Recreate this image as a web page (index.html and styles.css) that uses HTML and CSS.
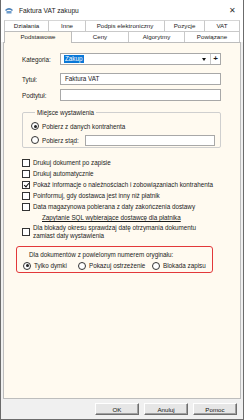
FILE: index.html
```html
<!DOCTYPE html>
<html lang="pl">
<head>
    <meta charset="UTF-8">
    <title>Faktura VAT zakupu</title>
    <link rel="stylesheet" href="styles.css">
</head>
<body>
<div class="window">
    <div class="titlebar">
        <svg class="appicon" width="8" height="7" viewBox="0 0 8 7">
            <path d="M0 3 Q4 -1 8 3 L7 4 Q4 1.5 1 4 Z" fill="#4a7fb5"/>
            <rect x="1.5" y="4" width="5" height="2.5" fill="#6d9ccc"/>
        </svg>
        <span class="title">Faktura VAT zakupu</span>
        <span class="close">&#x2715;</span>
    </div>

    <div class="tabs">
        <div class="tabrow">
            <div class="tab w44">Działania</div>
            <div class="tab w37">Inne</div>
            <div class="tab w79">Podpis elektroniczny</div>
            <div class="tab w40">Pozycje</div>
            <div class="tab grow">VAT</div>
        </div>
        <div class="tabrow">
            <div class="tab cur w67">Podstawowe</div>
            <div class="tab w57">Ceny</div>
            <div class="tab w56">Algorytmy</div>
            <div class="tab grow">Powiązane</div>
        </div>
    </div>

    <div class="panel">
        <div class="field first">
            <label>Kategoria:</label>
            <div class="combo">
                <span class="sel">Zakup</span>
                <span class="arrow"></span>
                <span class="plus">+</span>
            </div>
        </div>
        <div class="field">
            <label>Tytuł:</label>
            <div class="edit">Faktura VAT</div>
        </div>
        <div class="field">
            <label>Podtytuł:</label>
            <div class="edit"></div>
        </div>

        <fieldset class="group">
            <legend>Miejsce wystawienia</legend>
            <div class="opt"><span class="radio on"></span>Pobierz z danych kontrahenta</div>
            <div class="opt"><span class="radio"></span>Pobierz stąd:<div class="edit stad"></div></div>
        </fieldset>

        <div class="checks">
            <div class="chk"><span class="box"></span>Drukuj dokument po zapisie</div>
            <div class="chk"><span class="box"></span>Drukuj automatycznie</div>
            <div class="chk"><span class="box on"></span>Pokaż informacje o należnościach i zobowiązaniach kontrahenta</div>
            <div class="chk"><span class="box"></span>Poinformuj, gdy dostawca jest inny niż płatnik</div>
            <div class="chk"><span class="box"></span>Data magazynowa pobierana z daty zakończenia dostawy</div>
            <div class="link">Zapytanie SQL wybierające dostawcę dla płatnika</div>
            <div class="chk two"><span class="box"></span><span>Dla blokady okresu sprawdzaj datę otrzymania dokumentu<br>zamiast daty wystawienia</span></div>
        </div>

        <div class="dupbox">
            <div class="duptitle">Dla dokumentów z powielonym numerem oryginału:</div>
            <div class="dupopts">
                <div class="opt o1"><span class="radio on"></span>Tylko dymki</div>
                <div class="opt o2"><span class="radio"></span>Pokazuj ostrzeżenie</div>
                <div class="opt"><span class="radio"></span>Blokada zapisu</div>
            </div>
        </div>
    </div>

    <div class="footer">
        <button>OK</button>
        <button>Anuluj</button>
        <button>Pomoc</button>
    </div>
</div>
</body>
</html>
```

FILE: styles.css
```css
* {margin:0; padding:0; box-sizing:border-box;}

body {font-family:"Liberation Sans", Arial, sans-serif; font-size:6.3px; color:#1a1a1a; background:#fff;}

.window {width:244px; height:420px; border:1px solid #6b6b6b; border-top:none; display:flex; flex-direction:column; background:#f0f0f0;}

.titlebar {height:20px; background:#fff; display:flex; align-items:center; padding:0 0 0 4px;}
.appicon {margin-right:6px;}
.title {font-size:6.7px; flex:1;}
.close {font-size:8px; color:#333; width:22px; text-align:center;}

.tabs {background:#fff; padding:0 3px;}
.tabrow {display:flex; height:11px;}
.tab {border:1px solid #c9c9c9; border-bottom:none; margin-right:-1px; background:#fff; text-align:center; line-height:10px; font-size:6.2px; color:#222;}
.tabrow:first-child .tab {border-top-color:#d6d6d6;}
.tab.grow {flex:1; margin-right:0;}
.tab.cur {background:#fffaf0; height:12px; position:relative; z-index:2; border-color:#bdbdbd;}
.w44 {width:45px;} .w37 {width:38px;} .w79 {width:80px;} .w40 {width:41px;}
.w67 {width:68px;} .w57 {width:58px;} .w56 {width:57px;}

.panel {flex:1; background:#fffaf0; border:1px solid #bdbdbd; margin:0 2px 0 2px; padding:10px 19px 0 18px; position:relative; z-index:1;}

.field {display:flex; align-items:center; height:12px; margin-bottom:4px;}
.field.first {margin-bottom:8px;}
.field label {width:38px; flex:none;}
.edit {flex:1; height:12px; border:1px solid #a8a8a8; background:#fff; padding-left:4px; line-height:10px;}
.combo {flex:1; height:12px; border:1px solid #a8a8a8; background:#fff; display:flex; align-items:center; padding-left:3px;}
.combo .sel {background:#0a78d7; color:#fff; line-height:8px; padding:0 1px;}
.combo .arrow {margin-left:auto; width:0; height:0; border-left:2.5px solid transparent; border-right:2.5px solid transparent; border-top:3px solid #111; margin-right:4px;}
.combo .plus {width:10px; height:10px; border-left:1px solid #c8c8c8; text-align:center; font-weight:bold; font-size:8px; line-height:9px;}

.group {border:1px solid #cfcfcf; border-radius:2px; margin:8px 0 0 0; padding:4px 5px 4px 8px; height:39px;}
.group legend {padding:0 2px; margin-left:4px;}
.opt {display:flex; align-items:center; height:12px; margin-bottom:2px;}
.radio {width:8px; height:8px; border:1px solid #333; border-radius:50%; background:#fff; margin-right:3px; flex:none; position:relative;}
.radio.on:after {content:""; position:absolute; left:1.5px; top:1.5px; width:3px; height:3px; border-radius:50%; background:#222;}
.edit.stad {height:11px; margin-left:6px;}

.checks {margin-top:9px;}
.chk {display:flex; align-items:center; height:11px;}
.box {width:8px; height:8px; border:1px solid #333; background:#fff; margin-right:3px; flex:none; position:relative;}
.box.on:after {content:""; position:absolute; left:1.5px; top:0; width:2px; height:4px; border:solid #111; border-width:0 1.2px 1.2px 0; transform:rotate(40deg);}
.link {text-decoration:underline; height:11px; line-height:11px; padding-left:20px;}
.chk.two {height:18px; align-items:center; line-height:8px;}

.dupbox {border:1px solid #e2383a; border-radius:3px; margin:5px 8px 0 -6px; height:27px; padding:3px 0 0 6px;}
.duptitle {padding-left:6px; height:10px; line-height:9px;}
.dupopts {display:flex;}
.dupopts .opt {height:11px;}
.o1 {width:55px;} .o2 {width:74px;}

.footer {height:20px; display:flex; justify-content:flex-end; align-items:center; padding-right:6px; gap:5px; background:#f0f0f0;}
.footer button {width:44px; height:12px; font-family:"Liberation Sans", Arial, sans-serif; font-size:6.2px; color:#111; background:#e6e6e6; border:1px solid; border-color:#fff #6e6e6e #6e6e6e #fff; box-shadow:inset -1px -1px 0 #a0a0a0;}
```
